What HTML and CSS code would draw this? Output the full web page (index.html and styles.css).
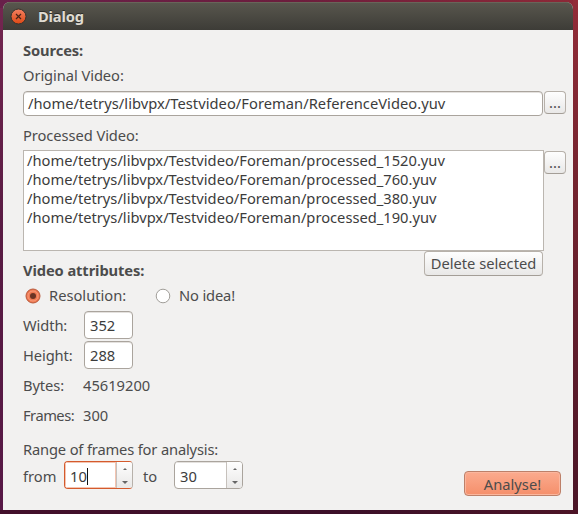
FILE: index.html
```
<!DOCTYPE html>
<html lang="en">
<head>
<meta charset="utf-8">
<title>Dialog</title>
<link rel="stylesheet" href="styles.css">
</head>
<body>
<div class="window">
  <header class="titlebar">
    <svg class="close" width="17" height="17" viewBox="0 0 17 17">
      <defs><linearGradient id="cg" x1="0" y1="0" x2="0" y2="1"><stop offset="0" stop-color="#f48162"/><stop offset="1" stop-color="#dd4814"/></linearGradient></defs>
      <circle cx="8.5" cy="8.5" r="7.5" fill="url(#cg)" stroke="#35332e"/>
      <path d="M6 6L11 11M11 6L6 11" stroke="#4a2417" stroke-width="1.2"/>
    </svg>
    <h1 class="title">Dialog</h1>
  </header>
  <main class="content">
    <h2 class="line heading sources"><span>Sources:</span></h2>
    <div class="line original"><span class="t-original">Original Video:</span></div>
    <div class="file-row">
      <div class="field path"><span class="t-path">/home/tetrys/libvpx/Testvideo/Foreman/ReferenceVideo.yuv</span></div>
      <button class="btn browse">...</button>
    </div>
    <div class="line processed"><span class="t-processed">Processed Video:</span></div>
    <div class="list-row">
      <ul class="list">
        <li>/home/tetrys/libvpx/Testvideo/Foreman/processed_1520.yuv</li>
        <li>/home/tetrys/libvpx/Testvideo/Foreman/processed_760.yuv</li>
        <li>/home/tetrys/libvpx/Testvideo/Foreman/processed_380.yuv</li>
        <li>/home/tetrys/libvpx/Testvideo/Foreman/processed_190.yuv</li>
      </ul>
      <button class="btn browse">...</button>
    </div>
    <div class="attr-row">
      <h2 class="line heading attrs"><span>Video attributes:</span></h2>
      <button class="btn delete"><span>Delete selected</span></button>
    </div>
    <div class="radios">
      <svg width="16" height="16" viewBox="0 0 16 16"><circle cx="8" cy="8" r="7" fill="#ef7850" stroke="#b8593b"/><circle cx="8" cy="8" r="5" fill="none" stroke="#f79c7c"/><circle cx="8" cy="8" r="3" fill="#6b3424"/></svg>
      <span class="t-resolution">Resolution:</span>
      <svg class="radio-off" width="16" height="16" viewBox="0 0 16 16"><circle cx="8" cy="8" r="6.8" fill="#fff" stroke="#a19e99"/></svg>
      <span class="t-noidea">No idea!</span>
    </div>
    <div class="pair"><span class="name"><span class="t-width">Width:</span></span><div class="field num">352</div></div>
    <div class="pair"><span class="name"><span class="t-height">Height:</span></span><div class="field num">288</div></div>
    <div class="pair"><span class="name"><span class="t-bytes">Bytes:</span></span><span class="value">45619200</span></div>
    <div class="pair"><span class="name"><span class="t-frames">Frames:</span></span><span class="value">300</span></div>
    <div class="line range"><span class="t-range">Range of frames for analysis:</span></div>
    <div class="bottom">
      <span class="from"><span class="t-from">from</span></span>
      <div class="spin active"><div class="entry">10<i class="caret"></i></div><div class="arrows"><i class="up"></i><i class="down"></i></div></div>
      <span class="to"><span class="t-to">to</span></span>
      <div class="spin"><div class="entry">30</div><div class="arrows"><i class="up"></i><i class="down"></i></div></div>
      <button class="btn analyse"><span>Analyse!</span></button>
    </div>
  </main>
</div>
</body>
</html>
```
FILE: styles.css
```
* { box-sizing: border-box; }
body {
  margin: 0;
  width: 578px;
  height: 514px;
  padding: 2px 5px 4px 3px;
  overflow: hidden;
  background:
    linear-gradient(90deg, #43102b 0%, #3c1029 60%, #4c1426 100%) 0 100% / 100% 4px no-repeat,
    linear-gradient(180deg, #932c38 0%, #74242f 35%, #5d1c2b 70%, #4a1527 100%) 100% 0 / 5px 100% no-repeat,
    linear-gradient(90deg, #68204a 0%, #6c1d3d 50%, #8d2937 100%) 0 0 / 100% 8px no-repeat,
    linear-gradient(180deg, #742650 0%, #591b43 45%, #571846 100%);
  font-family: "Noto Sans", sans-serif;
  font-size: 14.7px;
  line-height: 20px;
  color: #4c4c4c;
  white-space: nowrap;
}
.window { height: 508px; border-radius: 7px 7px 0 0; overflow: hidden; background: #f2f1f0; }
.titlebar {
  display: flex;
  align-items: center;
  height: 28px;
  padding: 0 7px;
  background: linear-gradient(#59574e, #3d3c37);
  box-shadow: inset 0 1px #686559;
}
.title { margin: 0 0 0 11px; font-size: 14.7px; letter-spacing: -0.15px; color: #dfdbd2; text-shadow: 0 -1px #2d2c28; }
.content { padding: 11px 7px 0 20px; }
h2 { margin: 0; font-size: 14.7px; }
.line { height: 20px; line-height: 18px; }
.heading { letter-spacing: -0.1px; }
.original { margin-top: 5px; letter-spacing: -0.07px; }
.file-row { display: flex; gap: 1px; margin-top: 5px; height: 25px; }
.field {
  display: flex;
  align-items: center;
  border: 1px solid #aaa49d;
  border-radius: 4px;
  background: #fff;
  box-shadow: inset 0 1px #e4e1de;
  color: #3c3c3c;
}
.path { width: 520px; padding: 0 0 2px 4px; letter-spacing: 0.035px; }
.btn {
  display: flex;
  align-items: center;
  justify-content: center;
  margin: 0;
  padding: 0;
  border: 1px solid #b7b1aa;
  border-bottom-color: #a49e97;
  border-radius: 4px;
  background: linear-gradient(#fefefe, #e9e8e7);
  font: inherit;
  color: #4c4c4c;
}
.browse { width: 22px; height: 23px; padding-bottom: 1px; }
.processed { margin-top: 10px; letter-spacing: -0.07px; }
.list-row { display: flex; margin-top: 4px; height: 101px; }
.list-row .browse { margin-top: 1px; }
.list {
  width: 521px;
  margin: 0;
  padding: 0 3px;
  list-style: none;
  border: 1px solid #bbb6b0;
  background: #fff;
  color: #3c3c3c;
  line-height: 19px;
}
.attr-row { display: flex; justify-content: space-between; height: 25px; padding-right: 23px; }
.attrs { margin-top: 10px; }
.delete { width: 119px; height: 25px; padding-bottom: 2px; }
.radios { display: flex; align-items: center; height: 20px; margin: 10px 0 5px 2px; }
.radios span { width: 106px; margin-left: 8px; padding-bottom: 2px; }
.t-noidea { letter-spacing: -0.15px; }
.pair { display: flex; align-items: center; height: 28px; margin-bottom: 2px; }
.name { width: 61px; letter-spacing: -0.1px; }
.t-frames { letter-spacing: -0.5px; }
.num { width: 49px; height: 28px; padding-left: 5px; }
.value { margin-left: -1px; }
.line.range { margin-top: 10px; line-height: 20px; letter-spacing: -0.16px; }
.bottom { display: flex; height: 35px; margin-top: 2px; line-height: 28px; }
.from, .to { padding-top: 1px; }
.from { width: 41px; }
.to { width: 41px; padding-left: 10px; }
.spin {
  display: flex;
  width: 69px;
  height: 28px;
  border: 1px solid #aaa49d;
  border-radius: 4px;
  overflow: hidden;
  background: #fff;
  color: #3c3c3c;
}
.entry { display: flex; align-items: center; width: 51px; padding: 2px 0 0 5px; box-shadow: inset 0 1px #e4e1de; }
.active { border-color: #d45a2c; border-right-color: #b7b1aa; }
.active .entry { box-shadow: inset 0 0 0 1px #f4c4b1; }
.caret { width: 1px; height: 17px; background: #111; }
.arrows {
  display: flex;
  flex: 1;
  flex-direction: column;
  align-items: center;
  justify-content: space-between;
  padding: 6px 0 4px;
  border-left: 1px solid #c6c1bc;
  background: linear-gradient(#fefefe, #e9e8e7);
}
.up, .down { border: 2px solid transparent; border-top: 0; border-bottom: 2px solid #666; }
.down { border-bottom: 0; border-top: 3px solid #666; border-left-width: 3px; border-right-width: 3px; }
.analyse {
  width: 97px;
  height: 25px;
  margin: 10px 5px 0 auto;
  border-color: #bd8069;
  background: linear-gradient(#fbab8e, #f58f6b);
  box-shadow: inset 0 0 0 1px #fbb69d;
}
```
